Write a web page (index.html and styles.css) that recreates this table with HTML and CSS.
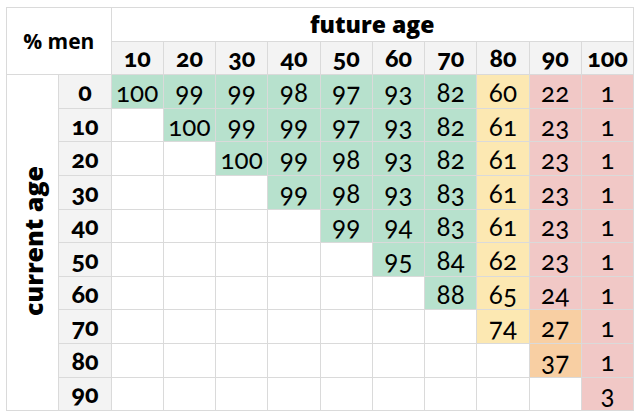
FILE: index.html
```html
<!DOCTYPE html>
<html>
<head>
<meta charset="utf-8">
<link rel="stylesheet" href="styles.css">
</head>
<body>
<table class="grid">
  <colgroup>
    <col><col><col><col><col><col><col><col><col><col><col><col>
  </colgroup>
  <tr class="r">
    <th class="corner" rowspan="2" colspan="2">% men</th>
    <th class="title" colspan="10">future age</th>
  </tr>
  <tr class="r">
    <th class="hd">10</th><th class="hd">20</th><th class="hd">30</th><th class="hd">40</th><th class="hd">50</th><th class="hd">60</th><th class="hd">70</th><th class="hd">80</th><th class="hd">90</th><th class="hd">100</th>
  </tr>
  <tr class="r">
    <th class="side" rowspan="10"><span class="vlabel">current age</span></th>
    <th class="hd">0</th>
    <td class="g">100</td><td class="g">99</td><td class="g">99</td><td class="g">98</td><td class="g">97</td><td class="g">93</td><td class="g">82</td><td class="y">60</td><td class="p">22</td><td class="p">1</td>
  </tr>
  <tr class="r">
    <th class="hd">10</th>
    <td></td><td class="g">100</td><td class="g">99</td><td class="g">99</td><td class="g">97</td><td class="g">93</td><td class="g">82</td><td class="y">61</td><td class="p">23</td><td class="p">1</td>
  </tr>
  <tr class="r">
    <th class="hd">20</th>
    <td></td><td></td><td class="g">100</td><td class="g">99</td><td class="g">98</td><td class="g">93</td><td class="g">82</td><td class="y">61</td><td class="p">23</td><td class="p">1</td>
  </tr>
  <tr class="r">
    <th class="hd">30</th>
    <td></td><td></td><td></td><td class="g">99</td><td class="g">98</td><td class="g">93</td><td class="g">83</td><td class="y">61</td><td class="p">23</td><td class="p">1</td>
  </tr>
  <tr class="r">
    <th class="hd">40</th>
    <td></td><td></td><td></td><td></td><td class="g">99</td><td class="g">94</td><td class="g">83</td><td class="y">61</td><td class="p">23</td><td class="p">1</td>
  </tr>
  <tr class="r">
    <th class="hd">50</th>
    <td></td><td></td><td></td><td></td><td></td><td class="g">95</td><td class="g">84</td><td class="y">62</td><td class="p">23</td><td class="p">1</td>
  </tr>
  <tr class="r">
    <th class="hd">60</th>
    <td></td><td></td><td></td><td></td><td></td><td></td><td class="g">88</td><td class="y">65</td><td class="p">24</td><td class="p">1</td>
  </tr>
  <tr class="r">
    <th class="hd">70</th>
    <td></td><td></td><td></td><td></td><td></td><td></td><td></td><td class="y">74</td><td class="o">27</td><td class="p">1</td>
  </tr>
  <tr class="r">
    <th class="hd">80</th>
    <td></td><td></td><td></td><td></td><td></td><td></td><td></td><td></td><td class="o">37</td><td class="p">1</td>
  </tr>
  <tr class="r">
    <th class="hd">90</th>
    <td></td><td></td><td></td><td></td><td></td><td></td><td></td><td></td><td></td><td class="p">3</td>
  </tr>
</table>
</body>
</html>
```

FILE: styles.css
```css
html, body {
  margin: 0;
  padding: 0;
  background: #ffffff;
}
body {
  padding: 7px 0 0 6px;
  font-family: Lato, "Open Sans", "Noto Sans", sans-serif;
  color: #000;
}
.grid {
  border-collapse: collapse;
  table-layout: fixed;
  width: 627px;
  font-variant-numeric: oldstyle-nums;
}
.grid col {
  width: 52.25px;
}
.r {
  height: 33.6px;
}
.grid th,
.grid td {
  border: 1px solid #dadada;
  padding: 0;
  text-align: center;
  vertical-align: middle;
  overflow: hidden;
  white-space: nowrap;
}
.grid td {
  font-size: 26px;
  font-weight: 400;
  line-height: 1;
  padding-top: 1px;
}
.corner {
  background: #fff;
  font-family: "Open Sans", Lato, sans-serif;
  font-size: 21px;
  font-weight: 700;
}
.title {
  background: #fff;
  font-family: "Open Sans", Lato, sans-serif;
  font-size: 23px;
  font-weight: 800;
}
.hd {
  background: #f3f3f3;
  font-size: 25px;
  font-weight: 900;
  line-height: 1;
}
.side {
  background: #fff;
}
.vlabel {
  display: inline-block;
  writing-mode: vertical-rl;
  transform: rotate(180deg);
  font-family: "Open Sans", Lato, sans-serif;
  font-size: 25px;
  font-weight: 800;
}
.g { background: #b7e1cd; }
.y { background: #fce8b2; }
.o { background: #f8cfa3; }
.p { background: #f1c8c6; }
```
